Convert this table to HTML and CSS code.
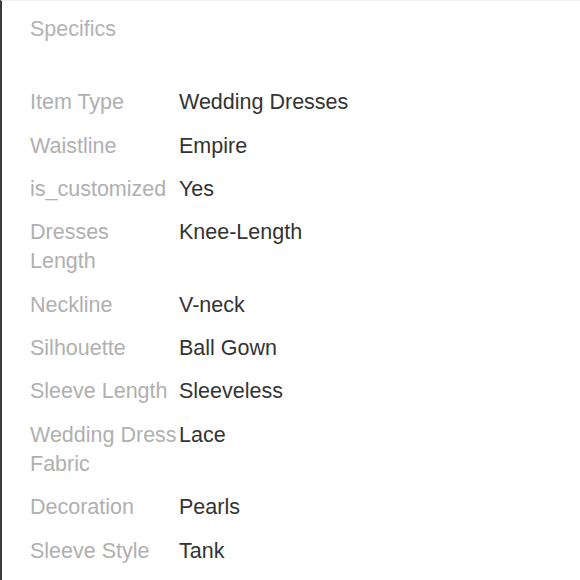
FILE: index.html
```html
<!DOCTYPE html>
<html>
<head>
<meta charset="utf-8">
<link rel="stylesheet" href="styles.css">
</head>
<body>
<div class="panel">
  <h2 class="title">Specifics</h2>
  <dl class="specs">
    <div class="row"><dt>Item Type</dt><dd>Wedding Dresses</dd></div>
    <div class="row"><dt>Waistline</dt><dd>Empire</dd></div>
    <div class="row"><dt>is_customized</dt><dd>Yes</dd></div>
    <div class="row"><dt>Dresses Length</dt><dd>Knee-Length</dd></div>
    <div class="row"><dt>Neckline</dt><dd>V-neck</dd></div>
    <div class="row"><dt>Silhouette</dt><dd>Ball Gown</dd></div>
    <div class="row"><dt>Sleeve Length</dt><dd>Sleeveless</dd></div>
    <div class="row"><dt>Wedding Dress Fabric</dt><dd>Lace</dd></div>
    <div class="row"><dt>Decoration</dt><dd>Pearls</dd></div>
    <div class="row"><dt>Sleeve Style</dt><dd>Tank</dd></div>
  </dl>
</div>
</body>
</html>
```

FILE: styles.css
```css
html, body {
  margin: 0;
  padding: 0;
  background: #ffffff;
}
.panel {
  box-sizing: border-box;
  width: 580px;
  height: 580px;
  border-left: 2px solid #3a3a3a;
  border-top: 1px solid #f0f0f0;
  padding: 14px 0 0 28px;
  font-family: "Liberation Sans", Arial, sans-serif;
  font-size: 21.5px;
  line-height: 29px;
  overflow: hidden;
}
.title {
  margin: 0;
  font-size: 21.5px;
  font-weight: normal;
  color: #b3b3b3;
  line-height: 29px;
}
.specs {
  margin: 37px 0 0 0;
  padding: 0;
}
.row {
  display: flex;
  padding: 7.2px 0;
}
.row dt {
  width: 149px;
  flex: none;
  color: #b0b0b0;
  margin: 0;
}
.row dd {
  margin: 0;
  color: #333333;
}
```
